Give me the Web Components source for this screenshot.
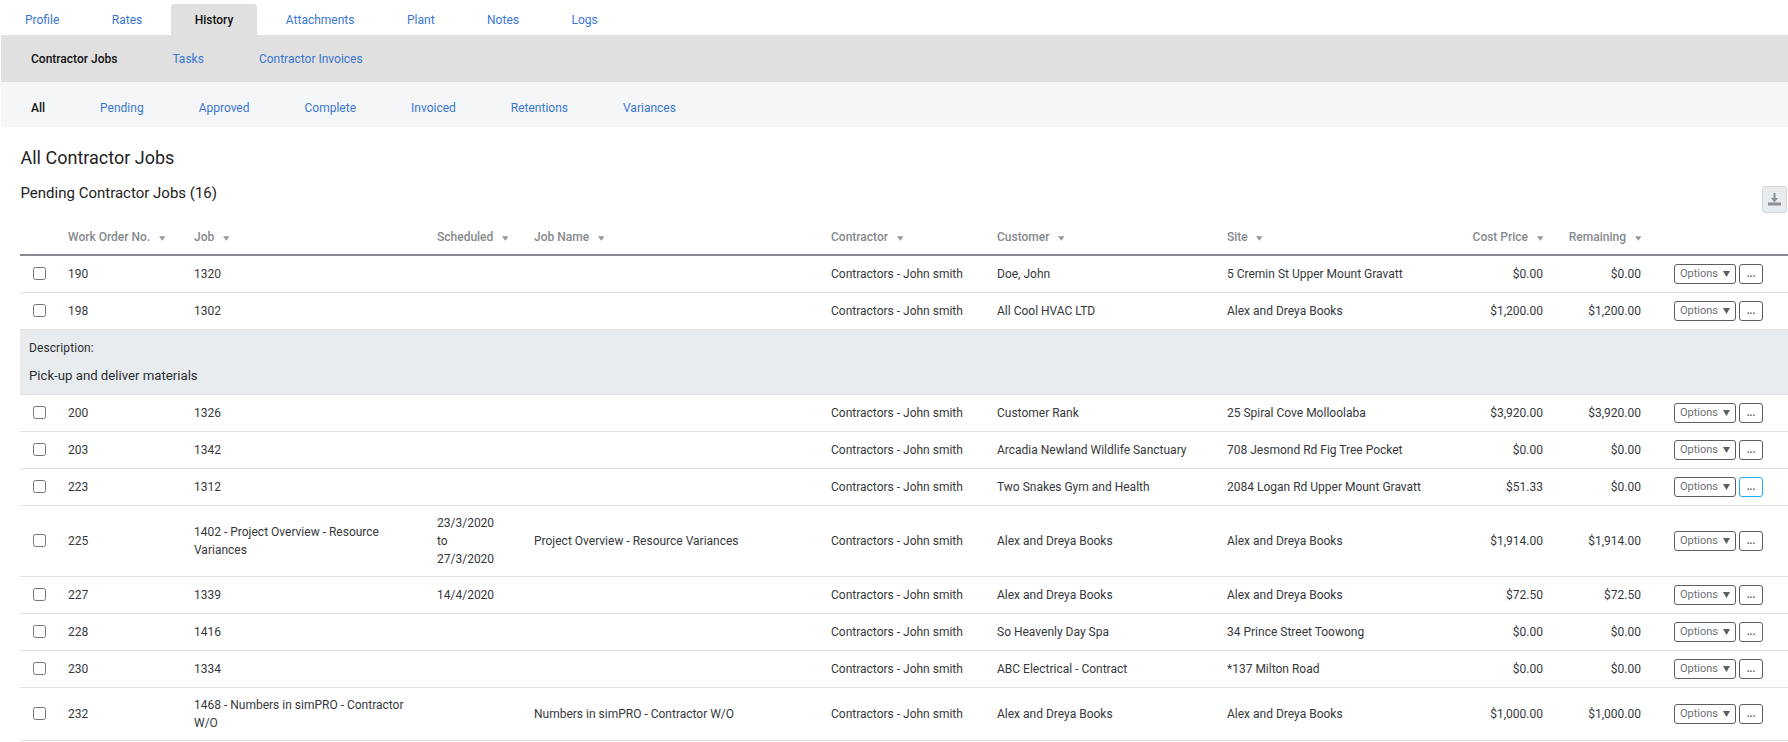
<!DOCTYPE html>
<html>
<head>
<meta charset="utf-8">
<title>Contractor Jobs</title>
<style>
  html, body { margin: 0; padding: 0; background: #fff; }
  body { font-family: Roboto, "Liberation Sans", sans-serif; font-size: 12px; color: #333; overflow: hidden; }
</style>
</head>
<body>
<tab-bar level="top">
  <tab-link>Profile</tab-link>
  <tab-link>Rates</tab-link>
  <tab-link active>History</tab-link>
  <tab-link>Attachments</tab-link>
  <tab-link>Plant</tab-link>
  <tab-link>Notes</tab-link>
  <tab-link>Logs</tab-link>
</tab-bar>
<tab-bar level="second">
  <tab-link active>Contractor Jobs</tab-link>
  <tab-link>Tasks</tab-link>
  <tab-link>Contractor Invoices</tab-link>
</tab-bar>
<tab-bar level="third">
  <tab-link active>All</tab-link>
  <tab-link>Pending</tab-link>
  <tab-link>Approved</tab-link>
  <tab-link>Complete</tab-link>
  <tab-link>Invoiced</tab-link>
  <tab-link>Retentions</tab-link>
  <tab-link>Variances</tab-link>
</tab-bar>

<jobs-panel heading="All Contractor Jobs" subheading="Pending Contractor Jobs (16)">
  <job-head></job-head>
  <job-row wo="190" job="1320" contractor="Contractors - John smith" customer="Doe, John" site="5 Cremin St Upper Mount Gravatt" cost="$0.00" remaining="$0.00"></job-row>
  <job-row wo="198" job="1302" contractor="Contractors - John smith" customer="All Cool HVAC LTD" site="Alex and Dreya Books" cost="$1,200.00" remaining="$1,200.00"></job-row>
  <job-description>Pick-up and deliver materials</job-description>
  <job-row wo="200" job="1326" contractor="Contractors - John smith" customer="Customer Rank" site="25 Spiral Cove Molloolaba" cost="$3,920.00" remaining="$3,920.00"></job-row>
  <job-row wo="203" job="1342" contractor="Contractors - John smith" customer="Arcadia Newland Wildlife Sanctuary" site="708 Jesmond Rd Fig Tree Pocket" cost="$0.00" remaining="$0.00"></job-row>
  <job-row wo="223" job="1312" contractor="Contractors - John smith" customer="Two Snakes Gym and Health" site="2084 Logan Rd Upper Mount Gravatt" cost="$51.33" remaining="$0.00" focused></job-row>
  <job-row wo="225" job="1402 - Project Overview - Resource Variances" scheduled="23/3/2020|to|27/3/2020" name="Project Overview - Resource Variances" contractor="Contractors - John smith" customer="Alex and Dreya Books" site="Alex and Dreya Books" cost="$1,914.00" remaining="$1,914.00"></job-row>
  <job-row wo="227" job="1339" scheduled="14/4/2020" contractor="Contractors - John smith" customer="Alex and Dreya Books" site="Alex and Dreya Books" cost="$72.50" remaining="$72.50"></job-row>
  <job-row wo="228" job="1416" contractor="Contractors - John smith" customer="So Heavenly Day Spa" site="34 Prince Street Toowong" cost="$0.00" remaining="$0.00"></job-row>
  <job-row wo="230" job="1334" contractor="Contractors - John smith" customer="ABC Electrical - Contract" site="*137 Milton Road" cost="$0.00" remaining="$0.00"></job-row>
  <job-row wo="232" job="1468 - Numbers in simPRO - Contractor W/O" name="Numbers in simPRO - Contractor W/O" contractor="Contractors - John smith" customer="Alex and Dreya Books" site="Alex and Dreya Books" cost="$1,000.00" remaining="$1,000.00"></job-row>
</jobs-panel>

<script>
// column widths shared by the header and every row
const cellStyle = `
    :host {
        display: grid;
        grid-template-columns: 48px 126px 243px 97px 297px 166px 230px 233px 83px 98px 1fr;
        align-items: center;
        box-sizing: border-box;
    }
    .num {
        text-align: right;
    }
`

class TabBar extends HTMLElement {
    constructor() {
        super()
        this.attachShadow({ mode: 'open' })
        this.shadowRoot.innerHTML = `
            <style>
                :host {
                    display: flex;
                    margin-left: 1px;
                    box-sizing: border-box;
                }
                :host([level="top"]) {
                    height: 35px;
                    padding-top: 4px;
                    gap: 4.5px;
                    --tab-pad: 24px;
                    --tab-active-bg: #e0e0e0;
                }
                :host([level="second"]) {
                    height: 47px;
                    padding-left: 30px;
                    gap: 55px;
                    background: #e0e0e0;
                }
                :host([level="third"]) {
                    height: 45px;
                    padding-left: 30px;
                    padding-top: 6px;
                    gap: 55px;
                    background: #f5f6f8;
                }
            </style>
            <slot></slot>
        `
    }
}

class TabLink extends HTMLElement {
    constructor() {
        super()
        this.attachShadow({ mode: 'open' })
        this.shadowRoot.innerHTML = `
            <style>
                :host {
                    display: flex;
                    align-items: center;
                    padding: 0 var(--tab-pad, 0);
                    color: #3a76d2;
                    font-size: 12px;
                    white-space: nowrap;
                    border-radius: 3px 3px 0 0;
                }
                :host([active]) {
                    color: #111;
                    font-weight: 500;
                    background: var(--tab-active-bg, transparent);
                }
            </style>
            <slot></slot>
        `
    }
}

class JobsPanel extends HTMLElement {
    constructor() {
        super()
        this.attachShadow({ mode: 'open' })
        this.shadowRoot.innerHTML = `
            <style>
                :host {
                    display: block;
                    padding-left: 20px;
                }
                h1 {
                    margin: 20px 0 15px 0.5px;
                    font-size: 18px;
                    line-height: 22px;
                    font-weight: 400;
                    color: #222;
                }
                .sub {
                    display: flex;
                    justify-content: space-between;
                    align-items: flex-start;
                    height: 29px;
                    padding-left: 0.5px;
                    padding-right: 1px;
                }
                h2 {
                    margin: 0;
                    font-size: 15px;
                    line-height: 18px;
                    font-weight: 400;
                    color: #222;
                }
                .export {
                    box-sizing: border-box;
                    width: 25px;
                    height: 27px;
                    margin-top: 2px;
                    display: flex;
                    align-items: center;
                    justify-content: center;
                    background: #e9ecef;
                    border: 1px solid #d5d8db;
                    border-radius: 3px;
                }
            </style>
            <h1></h1>
            <div class="sub">
                <h2></h2>
                <div class="export">
                    <svg width="13" height="13" viewBox="0 0 13 13" fill="#8a8f94"><path d="M5.5 0h2v5H10L6.5 9.5 3 5h2.5z"/><path d="M0 9.5h13v3H0z"/></svg>
                </div>
            </div>
            <slot></slot>
        `
        this.shadowRoot.querySelector('h1').textContent = this.getAttribute('heading')
        this.shadowRoot.querySelector('h2').textContent = this.getAttribute('subheading')
    }
}

class JobHead extends HTMLElement {
    constructor() {
        super()
        this.attachShadow({ mode: 'open' })
        const labels = ['Work Order No.', 'Job', 'Scheduled', 'Job Name', 'Contractor', 'Customer', 'Site', 'Cost Price', 'Remaining']
        const arrow = `<svg width="6.5" height="5" viewBox="0 0 7 5"><path d="M0 0h7L3.5 5z" fill="#96999c"/></svg>`
        const cells = labels.map((label, i) => {
            const num = i > 6
            return `<div class="${num ? 'num' : ''}">${label}<span class="sort">${arrow}</span></div>`
        }).join('')
        this.shadowRoot.innerHTML = `
            <style>
                ${cellStyle}
                :host {
                    height: 43px;
                    padding-bottom: 8px;
                    align-items: end;
                    border-bottom: 2.5px solid #868a8e;
                    color: #868a8e;
                    font-weight: 500;
                    line-height: 18px;
                    white-space: nowrap;
                }
                .sort {
                    display: inline-block;
                    margin-left: 8.5px;
                    width: 6.5px;
                }
                .sort svg {
                    display: inline-block;
                }
            </style>
            <div></div>
            ${cells}
            <div></div>
        `
    }
}

class JobRow extends HTMLElement {
    constructor() {
        super()
        this.attachShadow({ mode: 'open' })
        const attr = (name) => this.getAttribute(name) || ''
        const scheduled = attr('scheduled').split('|').join('<br>')
        this.shadowRoot.innerHTML = `
            <style>
                ${cellStyle}
                :host {
                    min-height: 37px;
                    padding: 8px 0;
                    border-bottom: 1px solid #e3e3e3;
                    line-height: 18px;
                    color: #36393c;
                }
                input {
                    display: block;
                    width: 13px;
                    height: 13px;
                    margin: -1px 0 0 13px;
                }
                .job {
                    padding-right: 20px;
                }
                .actions {
                    display: flex;
                    gap: 3px;
                    padding-left: 33px;
                }
            </style>
            <div><input type="checkbox"></div>
            <div>${attr('wo')}</div>
            <div class="job">${attr('job')}</div>
            <div>${scheduled}</div>
            <div>${attr('name')}</div>
            <div>${attr('contractor')}</div>
            <div>${attr('customer')}</div>
            <div>${attr('site')}</div>
            <div class="num">${attr('cost')}</div>
            <div class="num">${attr('remaining')}</div>
            <div class="actions">
                <options-button>Options</options-button>
                <more-button ${this.hasAttribute('focused') ? 'focused' : ''}></more-button>
            </div>
        `
    }
}

class OptionsButton extends HTMLElement {
    constructor() {
        super()
        this.attachShadow({ mode: 'open' })
        this.shadowRoot.innerHTML = `
            <style>
                :host {
                    display: flex;
                    align-items: center;
                    box-sizing: border-box;
                    width: 62px;
                    height: 20px;
                    padding-left: 5px;
                    border: 1px solid #5c5f62;
                    border-radius: 3px;
                    color: #6c7075;
                    font-size: 11px;
                }
                svg {
                    margin-left: 5px;
                }
            </style>
            <slot></slot>
            <svg width="7" height="6" viewBox="0 0 7 6"><path d="M0 0h7L3.5 6z" fill="#5c5f62"/></svg>
        `
    }
}

class MoreButton extends HTMLElement {
    constructor() {
        super()
        this.attachShadow({ mode: 'open' })
        this.shadowRoot.innerHTML = `
            <style>
                :host {
                    display: flex;
                    align-items: center;
                    justify-content: center;
                    box-sizing: border-box;
                    width: 24px;
                    height: 20px;
                    border: 1px solid #5c5f62;
                    border-radius: 3px;
                    color: #5c5f62;
                    font-size: 10px;
                    font-weight: 700;
                }
                :host([focused]) {
                    border-color: #1eb0ee;
                }
            </style>
            ...
        `
    }
}

class JobDescription extends HTMLElement {
    constructor() {
        super()
        this.attachShadow({ mode: 'open' })
        this.shadowRoot.innerHTML = `
            <style>
                :host {
                    display: block;
                    box-sizing: border-box;
                    height: 65px;
                    padding: 9px 9px 0;
                    background: #e9ecef;
                    border-bottom: 1px solid #e3e3e3;
                    color: #2b2e31;
                }
                .label {
                    line-height: 18px;
                    letter-spacing: 0.1px;
                }
                .text {
                    margin-top: 10px;
                    line-height: 18px;
                    font-size: 13.2px;
                }
            </style>
            <div class="label">Description:</div>
            <div class="text"><slot></slot></div>
        `
    }
}

customElements.define('tab-bar', TabBar)
customElements.define('tab-link', TabLink)
customElements.define('jobs-panel', JobsPanel)
customElements.define('job-head', JobHead)
customElements.define('job-row', JobRow)
customElements.define('options-button', OptionsButton)
customElements.define('more-button', MoreButton)
customElements.define('job-description', JobDescription)
</script>
</body>
</html>
